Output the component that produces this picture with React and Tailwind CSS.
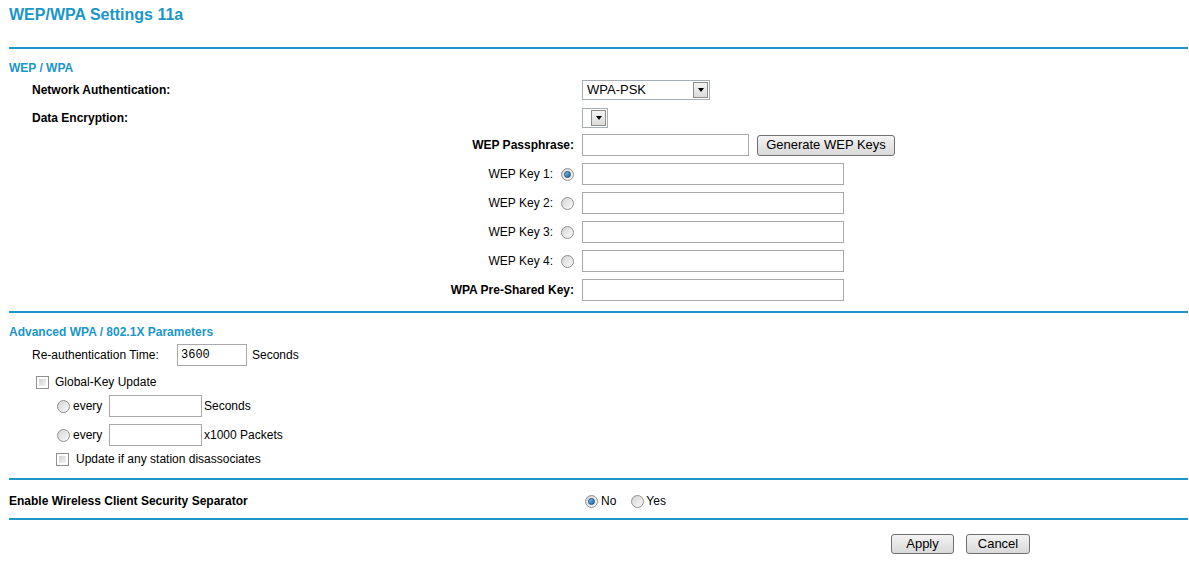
import React from "react";

const Radio = ({ checked }) => (
  <span className="inline-flex h-[13px] w-[13px] shrink-0 items-center justify-center rounded-full border border-[#8f8f8f] bg-gradient-to-br from-[#d4d4d4] to-[#fbfbfb]">
    {checked && (
      <span className="h-[7px] w-[7px] rounded-full border border-[#1d4f7a] bg-gradient-to-br from-[#7cc3f0] to-[#1f62a0]" />
    )}
  </span>
);

const Checkbox = () => (
  <span className="inline-block h-[13px] w-[13px] shrink-0 border border-[#8f8f8f] bg-white p-[2px]">
    <span className="block h-full w-full bg-gradient-to-br from-[#cfcfcf] to-[#f6f6f6]" />
  </span>
);

const Input = ({ className = "", value = "" }) => (
  <input
    type="text"
    defaultValue={value}
    className={`h-[22px] border border-[#a9a9a9] bg-white px-[3px] outline-none ${className}`}
  />
);

const Select = ({ label, className = "" }) => (
  <div className={`flex h-[20px] items-center justify-between border border-[#a5acb2] bg-white pl-[4px] pr-[1px] text-[13px] ${className}`}>
    <span>{label}</span>
    <span className="flex h-[16px] w-[15px] items-center justify-center border border-[#8b8b8b] bg-gradient-to-b from-[#f4f4f4] to-[#dcdcdc]">
      <span className="h-0 w-0 border-x-[3.5px] border-t-[4px] border-x-transparent border-t-black" />
    </span>
  </div>
);

const Button = ({ children, className = "" }) => (
  <button
    type="button"
    className={`h-[20px] rounded-[3px] border border-[#707070] bg-gradient-to-b from-[#f3f3f3] to-[#d9d9d9] text-[13px] leading-[18px] text-black ${className}`}
  >
    {children}
  </button>
);

const Rule = ({ className = "" }) => <div className={`h-[2px] bg-[#1a96c9] ${className}`} />;

export default function App() {
  return (
    <div className="min-h-[576px] w-[1189px] bg-white pl-[9px] pr-[1px] font-['Liberation_Sans',Arial,sans-serif] text-[12px] leading-[14px] text-black">
      <div className="h-[47px] pt-[6px]">
        <h1 className="text-[16px] font-bold leading-[18px] text-[#1a96c9]">WEP/WPA Settings 11a</h1>
      </div>
      <Rule />

      {/* WEP / WPA */}
      <div className="mt-[12px] font-bold text-[#1a96c9]">WEP / WPA</div>

      <div className="mt-[5px] flex h-[20px] items-center">
        <div className="w-[573px] pl-[23px] font-bold">Network Authentication:</div>
        <Select label="WPA-PSK" className="w-[128px]" />
      </div>

      <div className="mt-[8px] flex h-[20px] items-center">
        <div className="w-[573px] pl-[23px] font-bold">Data Encryption:</div>
        <Select label="" className="w-[26px]" />
      </div>

      <div className="mt-[6px] flex h-[22px] items-center">
        <div className="w-[573px] pr-[8px] text-right font-bold">WEP Passphrase:</div>
        <Input className="w-[167px]" />
        <Button className="ml-[8px] w-[138px] h-[21px]">Generate WEP Keys</Button>
      </div>

      {[1, 2, 3, 4].map((n) => (
        <div key={n} className="mt-[7px] flex h-[22px] items-center">
          <div className="flex w-[573px] items-center justify-end pr-[8px]">
            <span>WEP Key {n}:</span>
            <span className="ml-[8px] flex">
              <Radio checked={n === 1} />
            </span>
          </div>
          <Input className="w-[262px]" />
        </div>
      ))}

      <div className="mt-[7px] flex h-[22px] items-center">
        <div className="w-[573px] pr-[8px] text-right font-bold">WPA Pre-Shared Key:</div>
        <Input className="w-[262px]" />
      </div>

      <Rule className="mt-[10px]" />

      {/* Advanced */}
      <div className="mt-[12px] font-bold text-[#1a96c9]">Advanced WPA / 802.1X Parameters</div>

      <div className="mt-[5px] flex h-[22px] items-center pl-[23px]">
        <div className="w-[145px]">Re-authentication Time:</div>
        <Input value="3600" className="w-[70px] font-['Liberation_Mono',monospace] text-[12px]" />
        <span className="ml-[5px]">Seconds</span>
      </div>

      <div className="mt-[5px] flex h-[22px] items-center pl-[27px]">
        <Checkbox />
        <span className="ml-[6px]">Global-Key Update</span>
      </div>

      <div className="mt-[2px] flex h-[22px] items-center pl-[48px]">
        <Radio />
        <span className="ml-[3px] w-[36px]">every</span>
        <Input className="w-[93px]" />
        <span className="ml-[2px]">Seconds</span>
      </div>

      <div className="mt-[7px] flex h-[22px] items-center pl-[48px]">
        <Radio />
        <span className="ml-[3px] w-[36px]">every</span>
        <Input className="w-[93px]" />
        <span className="ml-[2px]">x1000 Packets</span>
      </div>

      <div className="mt-[2px] flex h-[22px] items-center pl-[47px]">
        <Checkbox />
        <span className="ml-[7px]">Update if any station disassociates</span>
      </div>

      <Rule className="mt-[8px]" />

      <div className="mt-[10px] flex h-[22px] items-center">
        <div className="w-[576px] font-bold">Enable Wireless Client Security Separator</div>
        <Radio checked />
        <span className="ml-[3px]">No</span>
        <span className="ml-[15px] flex">
          <Radio />
        </span>
        <span className="ml-[2px]">Yes</span>
      </div>

      <Rule className="mt-[6px]" />

      <div className="mt-[14px] flex items-center pl-[882px]">
        <Button className="w-[63px]">Apply</Button>
        <Button className="ml-[12px] w-[64px]">Cancel</Button>
      </div>
    </div>
  );
}
